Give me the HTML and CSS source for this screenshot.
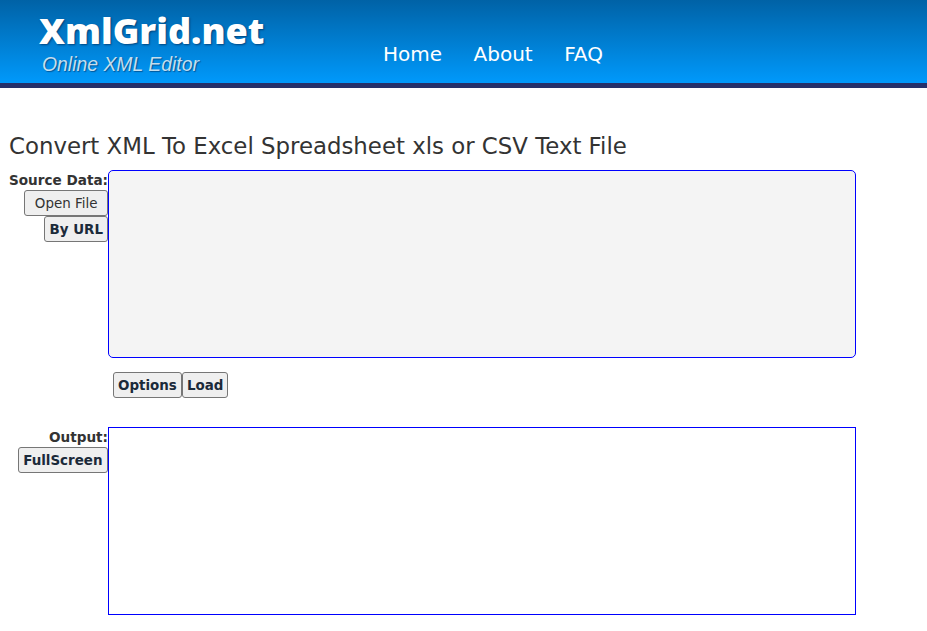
FILE: index.html
```html
<!DOCTYPE html>
<html lang="en">
<head>
    <meta charset="UTF-8">
    <title>Convert XML To Excel Spreadsheet xls or CSV Text File</title>
    <link rel="stylesheet" href="styles.css">
</head>
<body>
    <div class="header">
        <div class="logo">
            <div class="logo-name">XmlGrid.net</div>
            <div class="logo-sub">Online XML Editor</div>
        </div>
        <div class="nav">
            <a href="#">Home</a>
            <a href="#">About</a>
            <a href="#">FAQ</a>
        </div>
    </div>

    <h1>Convert XML To Excel Spreadsheet xls or CSV Text File</h1>

    <div class="row">
        <div class="side">
            <b>Source Data:</b>
            <button class="normal">Open File</button>
            <button>By URL</button>
        </div>
        <div class="box source"></div>
    </div>

    <div class="actions">
        <button>Options</button><button>Load</button>
    </div>

    <div class="row">
        <div class="side">
            <b>Output:</b>
            <button class="wide">FullScreen</button>
        </div>
        <div class="box output"></div>
    </div>
</body>
</html>
```

FILE: styles.css
```css
body {
    margin: 0;
    background: white;
    color: #333;
    font-family: "DejaVu Sans", Verdana, sans-serif;
    font-size: 13.6px;
    overflow: hidden;
}
.header {
    display: flex;
    height: 83px;
    border-bottom: 5px solid #25306a;
    background: linear-gradient(#0062a6 0%, #0099fb 100%);
}
.logo {
    width: 346px;
    padding: 11px 0 0 39px;
    box-sizing: border-box;
    color: white;
}
.logo-name {
    font-family: "Open Sans", sans-serif;
    font-weight: 800;
    font-size: 36px;
    line-height: 40px;
    text-shadow: 1px 1px 2px rgba(0,30,70,0.6);
}
.logo-sub {
    margin: 1px 0 0 3px;
    font-family: "Liberation Sans", sans-serif;
    font-style: italic;
    font-size: 19.4px;
    line-height: 24px;
    color: #c4deee;
    text-shadow: 1px 1px 1px rgba(0,30,70,0.5);
}
.nav {
    display: flex;
    gap: 31.5px;
    padding: 42px 0 0 37px;
}
.nav a {
    color: white;
    font-size: 20px;
    line-height: 24px;
    text-decoration: none;
}
h1 {
    margin: 43px 0 9px 9px;
    font-size: 22.85px;
    line-height: 30px;
    font-weight: normal;
}
.row {
    display: flex;
}
.side {
    display: flex;
    flex-direction: column;
    align-items: flex-end;
    width: 108px;
    padding-top: 1px;
    box-sizing: border-box;
}
.side b {
    line-height: 19px;
}
.box {
    width: 748px;
    height: 188px;
    box-sizing: border-box;
    border: 1px solid #0000ff;
}
.source {
    background: #f4f4f4;
    border-radius: 5px;
}
.actions {
    padding: 14px 0 29px 113px;
    height: 26px;
}
button {
    height: 26px;
    padding: 0 4px;
    border: 1px solid #767676;
    border-radius: 3px;
    background: #efefef;
    color: #1b2a3a;
    font-family: "DejaVu Sans", Verdana, sans-serif;
    font-size: 13.45px;
    font-weight: bold;
}
button.normal {
    padding: 0 9.5px;
    font-weight: normal;
    color: #333;
}
button.wide {
    padding: 0 4.5px;
}
```
